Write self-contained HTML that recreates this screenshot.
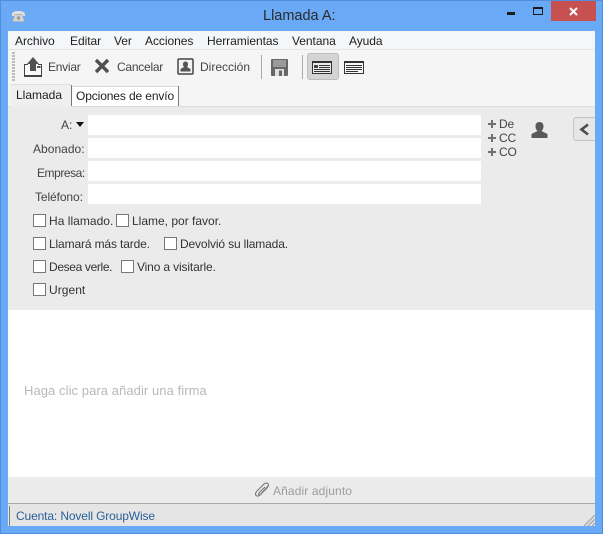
<!DOCTYPE html>
<html lang="es"><head><meta charset="utf-8"><title>Llamada A:</title>
<style>
html,body{margin:0;padding:0;width:603px;height:534px;overflow:hidden;background:#69a9f5}
body{position:relative;font-family:"Liberation Sans",sans-serif;font-size:12px;color:#333}
div,span,svg{position:absolute}
span{white-space:nowrap;line-height:14px}
.m{top:34px;color:#1e1e1e;letter-spacing:-.05px}
.t{top:60px;color:#444;letter-spacing:-.25px}
.l{color:#444}
.i{left:88px;width:393px;height:20px;background:#fff}
.c{width:11px;height:11px;border:1px solid #777;background:#fff}
.k{color:#333;letter-spacing:-.14px}
.p{left:499px;color:#444;letter-spacing:-.2px}
.h{left:488px;width:8px;height:2px;background:#707070}
.v{left:491px;width:2px;height:8px;background:#707070}
</style></head><body>
<div style="left:0;top:0;width:603px;height:534px;box-sizing:border-box;border:1px solid #4f8fdc"></div>
<svg style="left:11px;top:9px" width="15" height="13" viewBox="0 0 15 13"><path d="M1 5C1 1 14 1 14 5V7H10V5H5V7H1Z" fill="#e0e0dc"/><path d="M4 5.500H11L13.500 12.500H1.500Z" fill="#d6d6d2" stroke="#a9a9a5" stroke-width=".6"/><circle cx="7.500" cy="9" r="1.700" fill="#999995"/></svg>
<span style="left:263px;top:7px;font-size:14.5px;line-height:18px;color:#2b2b2b">Llamada A:</span>
<div style="left:507px;top:12px;width:8px;height:3px;background:#1c1c1c"></div>
<div style="left:533px;top:7px;width:8px;height:5px;border:1px solid #1c1c1c;border-top-width:2px;border-left-width:1px;border-right-width:1px"></div>
<div style="left:551px;top:1px;width:45px;height:20px;background:#c75050"></div>
<svg style="left:569px;top:7px" width="9" height="9" viewBox="0 0 9 9"><path d="M1 1L8 8M8 1L1 8" stroke="#fff" stroke-width="2"/></svg>

<div style="left:8px;top:31px;width:587px;height:495px;background:#f5f5f5"></div>
<div style="left:8px;top:31px;width:587px;height:18px;background:#f5f6f7"></div>
<div style="left:8px;top:49px;width:587px;height:1px;background:#e6e6e6"></div>
<span class="m" style="left:15px">Archivo</span>
<span class="m" style="left:70px">Editar</span>
<span class="m" style="left:114px">Ver</span>
<span class="m" style="left:145px">Acciones</span>
<span class="m" style="left:207px">Herramientas</span>
<span class="m" style="left:292px">Ventana</span>
<span class="m" style="left:349px">Ayuda</span>

<div style="left:12px;top:52px;width:3px;height:30px;background:repeating-linear-gradient(#bbb 0 2px,transparent 2px 3px)"></div>
<svg style="left:23px;top:56px" width="20" height="21" viewBox="0 0 20 21"><path d="M5 8.500H1.500V19.500H18.500V8.500H15" fill="#f8f8f8" stroke="#444"/><path d="M1 19H19V21H1Z" fill="#444"/><path d="M10 1L16 8H13V15H7V8H4Z" fill="#505050"/><path d="M14 10H17.500V12H14Z" fill="#555"/></svg>
<span class="t" style="left:48px">Enviar</span>
<svg style="left:94px;top:58px" width="16" height="16" viewBox="0 0 16 16"><path d="M2 2L14 14M14 2L2 14" stroke="#505050" stroke-width="3.400"/></svg>
<span class="t" style="left:117px">Cancelar</span>
<svg style="left:177px;top:58px" width="17" height="17" viewBox="0 0 17 17"><rect x="1" y="1" width="15" height="15" rx="1" fill="#f2f2f2" stroke="#444" stroke-width="1.500"/><path d="M8.500 3.500C10.500 3.500 11 5 11 6.500C11 7.500 10.500 8.500 10 9L13.500 11V13.500H3.500V11L7 9C6.500 8.500 6 7.500 6 6.500C6 5 6.500 3.500 8.500 3.500Z" fill="#555"/></svg>
<span class="t" style="left:200px;letter-spacing:0">Dirección</span>
<div style="left:261px;top:55px;width:1px;height:24px;background:#aaa"></div>
<svg style="left:271px;top:59px" width="17" height="17" viewBox="0 0 17 17"><rect width="17" height="17" rx="1" fill="#666"/><rect x="2" y="1" width="13" height="7" fill="#9a9a9a"/><rect x="4" y="10" width="9" height="7" fill="#dedede"/><rect x="8" y="11.500" width="3" height="5.500" fill="#666"/></svg>
<div style="left:302px;top:55px;width:1px;height:24px;background:#aaa"></div>
<div style="left:307px;top:53px;width:32px;height:27px;box-sizing:border-box;background:#d4d4d4;border:1px solid #bdbdbd;border-radius:3px"></div>
<svg style="left:312px;top:61px" width="20" height="13" viewBox="0 0 20 13"><rect x=".5" y=".5" width="19" height="12" fill="#ececec" stroke="#333"/><rect width="20" height="2" fill="#333"/><rect x="2" y="4" width="4" height="3" fill="#444"/><path d="M7 4.500H18M7 6.500H18M2 8.500H18M2 10.500H18" stroke="#333"/></svg>
<svg style="left:344px;top:61px" width="20" height="13" viewBox="0 0 20 13"><rect x=".5" y=".5" width="19" height="12" fill="#f8f8f8" stroke="#333"/><rect width="20" height="2" fill="#333"/><path d="M2 4.500H18M2 6.500H18M2 8.500H18M2 10.500H14" stroke="#333"/></svg>

<div style="left:8px;top:106px;width:587px;height:1px;background:#dcdcdc"></div>
<div style="left:10px;top:84px;width:61px;height:23px;background:#efefef;border-top:1px solid #dedede;box-sizing:border-box"></div>
<div style="left:71px;top:85px;width:1px;height:21px;background:#777"></div>
<div style="left:72px;top:86px;width:107px;height:20px;background:#fff;border-top:1px solid #d8d8d8;box-sizing:border-box"></div>
<div style="left:178px;top:86px;width:1px;height:20px;background:#777"></div>
<span style="left:16px;top:88px;color:#1e1e1e">Llamada</span>
<span style="left:76px;top:89px;color:#1e1e1e;letter-spacing:-.12px">Opciones de envío</span>

<div style="left:8px;top:107px;width:587px;height:203px;background:#ebebeb"></div>
<span class="l" style="left:61px;top:118px">A:</span>
<svg style="left:76px;top:122px" width="8" height="5" viewBox="0 0 8 5"><path d="M0 0H8L4 5Z" fill="#111"/></svg>
<div class="i" style="top:115px"></div>
<span class="l" style="left:33px;top:142px;letter-spacing:.03px">Abonado:</span>
<div class="i" style="top:138px"></div>
<span class="l" style="left:37px;top:166px;letter-spacing:-.45px">Empresa:</span>
<div class="i" style="top:161px"></div>
<span class="l" style="left:35px;top:190px;letter-spacing:-.1px">Teléfono:</span>
<div class="i" style="top:184px"></div>

<div class="h" style="top:123px"></div><div class="v" style="top:120px"></div><span class="p" style="top:117px">De</span>
<div class="h" style="top:137px"></div><div class="v" style="top:134px"></div><span class="p" style="top:131px">CC</span>
<div class="h" style="top:151px"></div><div class="v" style="top:148px"></div><span class="p" style="top:145px">CO</span>
<svg style="left:531px;top:121px" width="17" height="17" viewBox="0 0 17 17"><path d="M8.500 1C11.500 1 12.500 3 12.500 5.500C12.500 7.500 11.500 9 10.500 10L16.500 13V17H.5V13L6.500 10C5.500 9 4.500 7.500 4.500 5.500C4.500 3 5.500 1 8.500 1Z" fill="#595959"/></svg>
<div style="left:573px;top:117px;width:22px;height:24px;box-sizing:border-box;background:#e6e6e6;border:1px solid #c4c4c4;border-right:0;border-radius:3px 0 0 3px"></div>
<svg style="left:579px;top:123px" width="11" height="13" viewBox="0 0 11 13"><path d="M9 1.500L2.500 6.500L9 11.500" fill="none" stroke="#4c4c4c" stroke-width="2.600"/></svg>

<div class="c" style="left:33px;top:214px"></div><span class="k" style="left:49px;top:214px;letter-spacing:.03px">Ha llamado.</span>
<div class="c" style="left:116px;top:214px"></div><span class="k" style="left:132px;top:214px;letter-spacing:0">Llame, por favor.</span>
<div class="c" style="left:33px;top:237px"></div><span class="k" style="left:49px;top:237px">Llamará más tarde.</span>
<div class="c" style="left:164px;top:237px"></div><span class="k" style="left:180px;top:237px">Devolvió su llamada.</span>
<div class="c" style="left:33px;top:260px"></div><span class="k" style="left:49px;top:260px;letter-spacing:-.35px">Desea verle.</span>
<div class="c" style="left:121px;top:260px"></div><span class="k" style="left:137px;top:260px">Vino a visitarle.</span>
<div class="c" style="left:33px;top:283px"></div><span class="k" style="left:49px;top:283px;letter-spacing:.05px">Urgent</span>

<div style="left:8px;top:310px;width:587px;height:167px;background:#fff"></div>
<span style="left:24px;top:384px;color:#b8b8b8;font-size:13px;letter-spacing:.07px">Haga clic para añadir una firma</span>

<div style="left:8px;top:477px;width:587px;height:26px;background:#ebebeb"></div>
<svg style="left:253px;top:481px" width="18" height="18" viewBox="0 0 18 18"><path d="M15 5L7 14C5 16 2.500 15 2.500 13C2.500 12 3 11 4 10L11 3C12.500 1.500 15.500 2 15.500 4C15.500 5 15 6 14 7L7.500 13.500C6.500 14.500 5 13.500 6 12L12 6" fill="none" stroke="#777" stroke-width="1.100"/></svg>
<span style="left:273px;top:484px;color:#9c9c9c;letter-spacing:.12px">Añadir adjunto</span>
<div style="left:8px;top:503px;width:587px;height:1px;background:#aaa"></div>
<div style="left:8px;top:504px;width:587px;height:22px;background:#e5e5e5"></div>
<div style="left:9px;top:506px;width:1px;height:20px;background:#808080"></div>
<span style="left:16px;top:509px;color:#2a6199;letter-spacing:-.13px">Cuenta: Novell GroupWise</span>
<svg style="left:584px;top:515px" width="11" height="11" viewBox="0 0 11 11"><path d="M0 11L11 0M4 11L11 4M8 11L11 8" stroke="#aaa" stroke-width="1.400"/></svg>
</body></html>
